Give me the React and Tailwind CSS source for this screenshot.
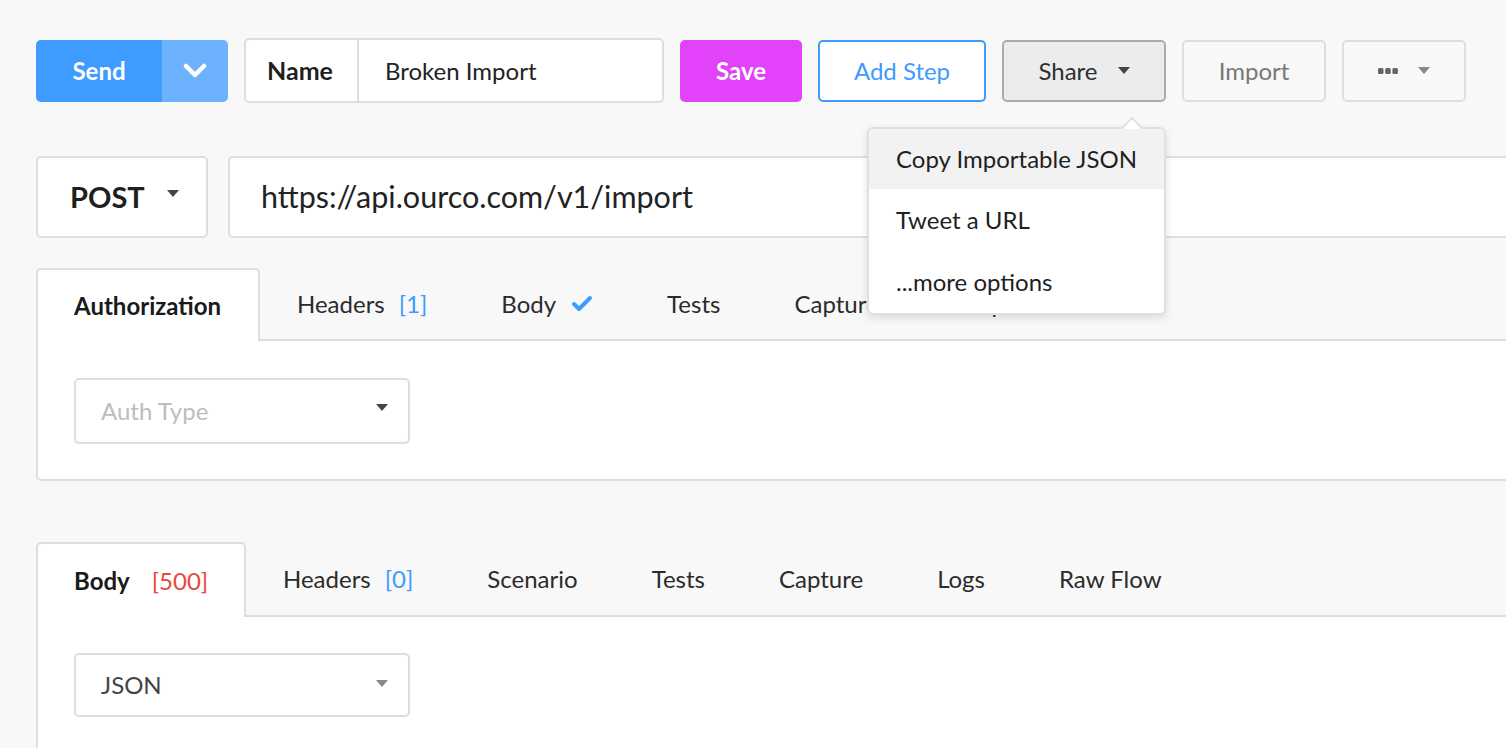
import React from "react";

const Caret = ({ className = "" }) => (
  <svg width="12" height="7" viewBox="0 0 12 7" className={className}>
    <path d="M0 0 L12 0 L6 7 Z" fill="currentColor" />
  </svg>
);

function Tab({ children, active, className = "" }) {
  return (
    <div className={`flex items-center px-[37px] text-[24px] ${active ? "font-bold text-[#1a1a1a]" : "text-[#2b2b2b]"} ${className}`}>
      {children}
    </div>
  );
}

export default function App() {
  return (
    <div className="w-[1506px] h-[748px] overflow-hidden bg-[#f8f8f8] relative" style={{ fontFamily: "Lato, 'Open Sans', sans-serif" }}>
      <div className="pl-[36px] pt-[38px] w-[1700px]">
        {/* Toolbar */}
        <div className="flex items-center gap-4 h-[65px]">
          <div className="flex h-[62px] w-[192px] rounded-[5px] overflow-hidden">
            <div className="w-[126px] bg-[#3e9bff] text-white text-[24px] font-bold flex items-center justify-center">Send</div>
            <div className="flex-1 bg-[#6cb2ff] flex items-center justify-center">
              <svg width="24" height="15" viewBox="0 0 24 15">
                <polyline points="3,3 12,12 21,3" fill="none" stroke="white" strokeWidth="4.5" strokeLinecap="round" strokeLinejoin="round" />
              </svg>
            </div>
          </div>
          <div className="flex h-[65px] w-[420px] border-2 border-[#dedede] rounded-[5px] bg-white">
            <div className="w-[113px] border-r-2 border-[#dedede] flex items-center pl-[21px] text-[25px] font-bold text-[#1f1f1f]">Name</div>
            <div className="flex items-center pl-[26px] text-[24px] text-[#222]">Broken Import</div>
          </div>
          <div className="h-[62px] w-[122px] rounded-[5px] bg-[#e242fa] text-white text-[24px] font-bold flex items-center justify-center">Save</div>
          <div className="h-[62px] w-[168px] rounded-[5px] border-2 border-[#3e9bff] bg-white text-[#3e9bff] text-[24px] flex items-center justify-center">Add Step</div>
          <div className="h-[62px] w-[164px] rounded-[5px] border-2 border-[#ababab] bg-[#ececec] text-[#2f2f2f] text-[24px] flex items-center justify-center gap-[20px]">
            <span>Share</span>
            <Caret className="text-[#444]" />
          </div>
          <div className="h-[62px] w-[144px] rounded-[5px] border-2 border-[#dedede] bg-[#f8f8f8] text-[#777] text-[24px] flex items-center justify-center">Import</div>
          <div className="h-[62px] w-[124px] rounded-[5px] border-2 border-[#dedede] bg-[#f8f8f8] flex items-center justify-center gap-[20px]">
            <svg width="20" height="6" viewBox="0 0 20 6">
              <rect x="0" y="0" width="5.5" height="6" rx="1.5" fill="#666" />
              <rect x="7.2" y="0" width="5.5" height="6" rx="1.5" fill="#666" />
              <rect x="14.4" y="0" width="5.5" height="6" rx="1.5" fill="#666" />
            </svg>
            <Caret className="text-[#888]" />
          </div>
        </div>

        {/* URL row */}
        <div className="flex gap-5 mt-[53px] h-[82px]">
          <div className="w-[172px] border-2 border-[#dedede] rounded-[5px] bg-white flex items-center pl-[32px] gap-[22px]">
            <span className="text-[29px] font-bold text-[#1f1f1f]">POST</span>
            <Caret className="text-[#444] -mt-2" />
          </div>
          <div className="flex-1 border-2 border-[#dedede] rounded-[5px] bg-white flex items-center pl-[31px] text-[30.5px] text-[#222]">
            https://api.ourco.com/v1/import
          </div>
        </div>

        {/* Request tabs */}
        <div className="mt-[30px]">
          <div className="flex h-[73px]">
            <Tab active className="bg-white border-2 border-b-0 border-[#dedede] rounded-t-[5px] w-[224px] pl-[36px]">Authorization</Tab>
            <div className="flex-1 flex border-b-2 border-[#dedede]">
              <Tab>Headers<span className="ml-[14px] text-[#3e9bff]">[1]</span></Tab>
              <Tab>
                Body
                <svg width="22" height="18" viewBox="0 0 22 18" className="ml-[15px]">
                  <polyline points="3,9 8,14 19,3" fill="none" stroke="#3e9bff" strokeWidth="4" strokeLinecap="round" strokeLinejoin="round" />
                </svg>
              </Tab>
              <Tab>Tests</Tab>
              <Tab>Capture</Tab>
              <Tab>Scripts</Tab>
            </div>
          </div>
          <div className="bg-white border-2 border-t-0 border-[#dedede] rounded-bl-[5px] pl-[36px] pt-[37px] pb-[35px]">
            <div className="w-[336px] h-[66px] border-2 border-[#dedede] rounded-[5px] flex items-center justify-between pl-[25px] pr-[20px]">
              <span className="text-[24px] text-[#bdbdbd]">Auth Type</span>
              <Caret className="text-[#444] -mt-2" />
            </div>
          </div>
        </div>

        {/* Response tabs */}
        <div className="mt-[61px]">
          <div className="flex h-[75px]">
            <Tab active className="bg-white border-2 border-b-0 border-[#dedede] rounded-t-[5px] w-[210px] pl-[36px]">
              Body<span className="ml-[22px] font-normal text-[#e8493a]">[500]</span>
            </Tab>
            <div className="flex-1 flex border-b-2 border-[#dedede]">
              <Tab>Headers<span className="ml-[14px] text-[#3e9bff]">[0]</span></Tab>
              <Tab>Scenario</Tab>
              <Tab>Tests</Tab>
              <Tab>Capture</Tab>
              <Tab>Logs</Tab>
              <Tab>Raw Flow</Tab>
            </div>
          </div>
          <div className="bg-white border-2 border-t-0 border-[#dedede] pl-[36px] pt-[36px] pb-[60px]">
            <div className="w-[336px] h-[64px] border-2 border-[#dedede] rounded-[5px] flex items-center justify-between pl-[25px] pr-[20px]">
              <span className="text-[24px] text-[#444]">JSON</span>
              <Caret className="text-[#888] -mt-1" />
            </div>
          </div>
        </div>
      </div>

      {/* Share dropdown */}
      <div className="absolute left-[867px] top-[127px] w-[299px] bg-white border-2 border-[#e0e0e0] rounded-[6px] shadow-[0_3px_8px_rgba(0,0,0,0.12)]">
        <div className="absolute -top-[9px] right-[24px] w-[16px] h-[16px] bg-white border-t-2 border-l-2 border-[#e0e0e0] rotate-45" />
        <div className="relative h-[60px] bg-[#f2f2f2] rounded-t-[4px] flex items-center pl-[27px] text-[24px] text-[#1f1f1f]">Copy Importable JSON</div>
        <div className="h-[62px] flex items-center pl-[27px] text-[24px] text-[#1f1f1f]">Tweet a URL</div>
        <div className="h-[62px] flex items-center pl-[27px] text-[24px] text-[#1f1f1f]">...more options</div>
      </div>
    </div>
  );
}
